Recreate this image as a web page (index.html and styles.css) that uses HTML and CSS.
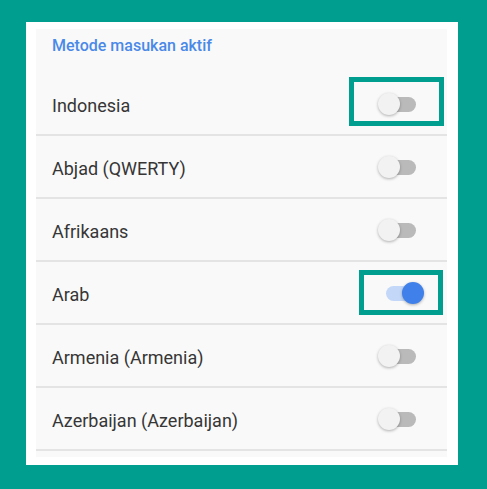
FILE: index.html
```html
<!DOCTYPE html>
<html lang="id">

<head>
    <meta charset="UTF-8">
    <meta name="viewport" content="width=device-width, initial-scale=1.0">
    <title>Metode masukan aktif</title>
    <link rel="stylesheet" href="styles.css">
</head>

<body>
    <div class="frame">
        <section class="panel">
            <h2 class="panel__title">Metode masukan aktif</h2>
            <ul class="lang-list">
                <li class="lang-item">
                    <span class="lang-item__name">Indonesia</span>
                    <span class="mark mark--wide"><span class="switch"><span class="switch__track"></span><span class="switch__thumb"></span></span></span>
                </li>
                <li class="lang-item">
                    <span class="lang-item__name">Abjad (QWERTY)</span>
                    <span class="switch"><span class="switch__track"></span><span class="switch__thumb"></span></span>
                </li>
                <li class="lang-item">
                    <span class="lang-item__name">Afrikaans</span>
                    <span class="switch"><span class="switch__track"></span><span class="switch__thumb"></span></span>
                </li>
                <li class="lang-item">
                    <span class="lang-item__name">Arab</span>
                    <span class="mark mark--narrow"><span class="switch switch--on"><span class="switch__track"></span><span class="switch__thumb"></span></span></span>
                </li>
                <li class="lang-item">
                    <span class="lang-item__name">Armenia (Armenia)</span>
                    <span class="switch"><span class="switch__track"></span><span class="switch__thumb"></span></span>
                </li>
                <li class="lang-item">
                    <span class="lang-item__name">Azerbaijan (Azerbaijan)</span>
                    <span class="switch"><span class="switch__track"></span><span class="switch__thumb"></span></span>
                </li>
            </ul>
        </section>
    </div>
</body>

</html>
```

FILE: styles.css
```css
body {
    background-color: #009e8e;
    font-family: Roboto, 'Noto Sans', sans-serif;
    margin: 0;
    padding: 22px 0 0 26px;
}

.frame {
    background-color: #fff;
    box-sizing: border-box;
    height: 443px;
    padding: 7px 11px 8px 10px;
    width: 432px;
}

.panel {
    background-color: #f9f9f9;
    height: 428px;
}

.panel__title {
    box-sizing: border-box;
    color: #4a89e8;
    font-size: 16px;
    font-weight: 500;
    height: 44px;
    line-height: 34px;
    margin: 0;
    padding-left: 16px;
}

.lang-list {
    list-style: none;
    margin: 0;
    padding: 0;
}

.lang-item {
    align-items: center;
    border-bottom: 2px solid #e4e4e4;
    box-sizing: border-box;
    color: #363636;
    display: flex;
    font-size: 18px;
    height: 63px;
    justify-content: space-between;
    padding: 0 31px 0 16px;
    position: relative;
}

.lang-item__name {
    padding-top: 3px;
}

.switch {
    display: block;
    height: 22px;
    position: relative;
    width: 38px;
}

.switch__track {
    background-color: #bababa;
    border-radius: 8px;
    height: 15px;
    left: 4px;
    position: absolute;
    top: 4px;
    width: 34px;
}

.switch__thumb {
    background-color: #f2f2f2;
    border-radius: 50%;
    box-shadow: 0 1px 3px rgba(0, 0, 0, 0.3);
    height: 22px;
    left: 0;
    position: absolute;
    top: 0;
    width: 22px;
}

.switch--on .switch__track {
    background-color: #c3d8f8;
    left: 8px;
}

.switch--on .switch__thumb {
    background-color: #3f80ea;
    left: 24px;
}

/* teal highlight boxes drawn over the switches */
.mark {
    position: relative;
}

.mark::after {
    border: 5px solid #009e8e;
    content: '';
    position: absolute;
}

.mark--wide::after {
    height: 39px;
    left: -29px;
    top: -16px;
    width: 85px;
}

.mark--narrow::after {
    height: 35px;
    left: -19px;
    top: -12px;
    width: 74px;
}
```
